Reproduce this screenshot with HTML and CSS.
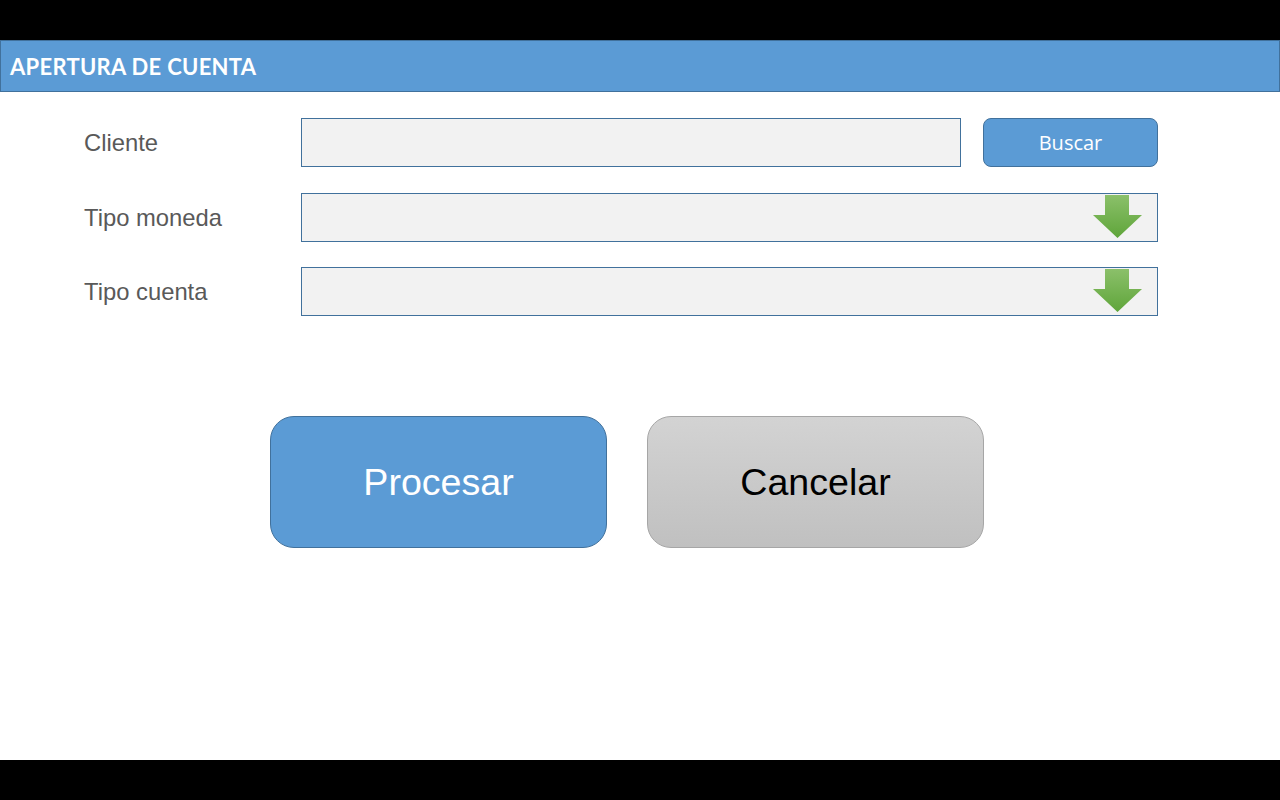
FILE: index.html
```html
<!DOCTYPE html>
<html lang="es">
<head>
<meta charset="utf-8">
<title>Apertura de cuenta</title>
<link rel="stylesheet" href="styles.css">
</head>
<body>
<div class="screen">
  <div class="bar"></div>
  <header class="header">APERTURA DE CUENTA</header>
  <main class="main">
    <div class="form">
      <div class="row">
        <span class="label">Cliente</span>
        <div class="field field-short"></div>
        <button class="btn-search">Buscar</button>
      </div>
      <div class="row">
        <span class="label">Tipo moneda</span>
        <div class="field field-long">
          <svg class="arrow" width="50" height="43" viewBox="0 0 50 43">
            <defs>
              <linearGradient id="g1" x1="0" y1="0" x2="0" y2="1">
                <stop offset="0" stop-color="#8bc06a"/>
                <stop offset="1" stop-color="#5fa53a"/>
              </linearGradient>
            </defs>
            <path d="M12 0 H36 V20 H49 L24.5 43 L0 20 H12 Z" fill="url(#g1)"/>
          </svg>
        </div>
      </div>
      <div class="row">
        <span class="label">Tipo cuenta</span>
        <div class="field field-long">
          <svg class="arrow" width="50" height="43" viewBox="0 0 50 43">
            <defs>
              <linearGradient id="g2" x1="0" y1="0" x2="0" y2="1">
                <stop offset="0" stop-color="#8bc06a"/>
                <stop offset="1" stop-color="#5fa53a"/>
              </linearGradient>
            </defs>
            <path d="M12 0 H36 V20 H49 L24.5 43 L0 20 H12 Z" fill="url(#g2)"/>
          </svg>
        </div>
      </div>
    </div>
    <div class="actions">
      <button class="btn-big btn-primary">Procesar</button>
      <button class="btn-big btn-cancel">Cancelar</button>
    </div>
  </main>
  <div class="bar"></div>
</div>
</body>
</html>
```

FILE: styles.css
```css
html, body {
  margin: 0;
  padding: 0;
  background: #000;
}
.screen {
  width: 1280px;
  height: 800px;
  display: flex;
  flex-direction: column;
}
.bar {
  height: 40px;
  background: #000;
  flex: none;
}
.header {
  height: 49px;
  padding-top: 1px;
  box-sizing: content-box;
  background: #5b9bd5;
  border: 1px solid #41719c;
  color: #fff;
  font-family: Lato, "Liberation Sans", sans-serif;
  font-weight: 700;
  font-size: 22px;
  letter-spacing: 0.3px;
  line-height: 50px;
  padding-left: 9px;
  flex: none;
}
.main {
  flex: 1;
  background: #fff;
  display: flex;
  flex-direction: column;
  padding-top: 26px;
}
.form {
  display: flex;
  flex-direction: column;
  gap: 25.5px;
}
.row {
  display: flex;
  align-items: center;
  height: 49px;
}
.label {
  width: 217px;
  padding-left: 84px;
  padding-top: 1px;
  font-family: "Liberation Sans", Arial, sans-serif;
  font-size: 23.8px;
  color: #595959;
}
.field {
  box-sizing: border-box;
  height: 49px;
  background: #f2f2f2;
  border: 1px solid #41719c;
  display: flex;
  align-items: flex-start;
  justify-content: flex-end;
}
.field-short {
  width: 660px;
}
.field-long {
  width: 857px;
  padding-right: 14px;
  padding-top: 1px;
}
.arrow {
  display: block;
}
.btn-search {
  box-sizing: border-box;
  margin-left: 22px;
  width: 175px;
  height: 49px;
  background: #5b9bd5;
  border: 1px solid #41719c;
  border-radius: 8px;
  color: #fff;
  font-family: "Open Sans", "Noto Sans", sans-serif;
  font-size: 20px;
  padding: 0;
}
.actions {
  display: flex;
  gap: 40px;
  padding-left: 270px;
  margin-top: 100px;
}
.btn-big {
  box-sizing: border-box;
  width: 337px;
  height: 132px;
  border-radius: 24px;
  font-family: "Liberation Sans", Arial, sans-serif;
  font-size: 37.6px;
  padding: 0;
}
.btn-primary {
  background: #5b9bd5;
  border: 1px solid #41719c;
  color: #fff;
}
.btn-cancel {
  background: linear-gradient(#d3d3d3, #c0c0c0);
  border: 1px solid #a6a6a6;
  color: #000;
}
```
